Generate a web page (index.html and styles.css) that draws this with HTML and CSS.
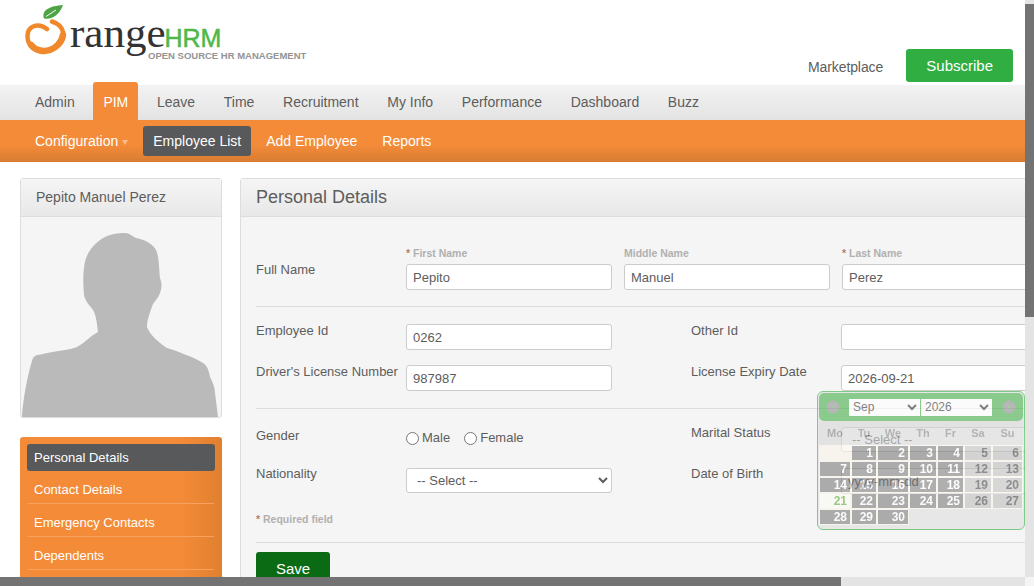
FILE: index.html
```html
<!DOCTYPE html>
<html lang="en">
<head>
    <meta charset="UTF-8">
    <title>OrangeHRM</title>
    <link rel="stylesheet" href="styles.css">
</head>
<body>
<div class="page">

    <header class="top">
        <div class="logo">
            <svg class="logo-mark" width="45" height="56" viewBox="25 0 45 56">
                <path d="M47 29C38 22 27 26 27.500 37C28 47 36 51.500 45 50.500C56 49.500 65 42 63 32C62 27 58 23.500 52 21.500" fill="none" stroke="#f0892c" stroke-width="4.500" stroke-linecap="round"/>
                <path d="M31 45C36 51 44 52 50 50C56 48 62 42 63 35" fill="none" stroke="#f0892c" stroke-width="6.500" stroke-linecap="round"/>
                <path d="M44 18.500C41 10 50 6 63 5C60 13 54 20 44 18.500Z" fill="#4ea444"/>
                <path d="M46 16.500L56 10" stroke="#fff" stroke-width="1"/>
            </svg>
            <div class="logo-text">
                <div class="logo-word">range<span class="logo-hrm">HRM</span></div>
                <div class="logo-tag">OPEN SOURCE HR MANAGEMENT</div>
            </div>
        </div>
        <a class="market">Marketplace</a>
        <a class="subscribe">Subscribe</a>
    </header>

    <nav class="tabs">
        <a>Admin</a>
        <a class="tab-on">PIM</a>
        <a>Leave</a>
        <a>Time</a>
        <a>Recruitment</a>
        <a>My Info</a>
        <a>Performance</a>
        <a>Dashboard</a>
        <a>Buzz</a>
    </nav>

    <nav class="subnav">
        <a>Configuration<span class="caret"></span></a>
        <a class="sub-on">Employee List</a>
        <a>Add Employee</a>
        <a>Reports</a>
    </nav>

    <main class="content">
        <aside class="side">
            <div class="profile">
                <div class="panel-head profile-name">Pepito Manuel Perez</div>
                <svg class="photo" width="200" height="200" viewBox="21 217 200 200">
                    <path fill="#bababa" d="M22 417C23 400 28 372 33 358C36 354 40 355 43 354C55 351 70 350 77 347C85 343 90 336 98 332C97 323 96 315 93 310C88 304 85 300 84 295C83 285 83 275 84 268C85 255 92 245 103 238C110 234 118 233 125 233C129 233 132 236 136 238C145 240 152 243 156 250C159 256 159 268 160 278C162 283 162 288 160 293C158 298 155 301 153 304C150 312 147 320 147 327C150 335 158 342 167 348C180 352 195 358 203 363C208 366 209 372 210 377C213 383 215 388 215 393L218 417Z"/>
                </svg>
            </div>
            <ul class="side-menu">
                <li class="side-on">Personal Details</li>
                <li>Contact Details</li>
                <li>Emergency Contacts</li>
                <li>Dependents</li>
            </ul>
        </aside>

        <section class="panel">
            <h1 class="panel-head panel-title">Personal Details</h1>
            <form class="panel-body">
                <div class="name-row">
                    <label class="field-label name-label">Full Name</label>
                    <div class="name-field">
                        <span class="small-label"><i>*</i> First Name</span>
                        <input type="text" value="Pepito">
                    </div>
                    <div class="name-field">
                        <span class="small-label">Middle Name</span>
                        <input type="text" value="Manuel">
                    </div>
                    <div class="name-field">
                        <span class="small-label"><i>*</i> Last Name</span>
                        <input type="text" value="Perez">
                    </div>
                </div>
                <hr class="rule rule-a">
                <div class="form-row row-id">
                    <label class="field-label">Employee Id</label>
                    <input type="text" value="0262">
                    <label class="field-label col-b">Other Id</label>
                    <input type="text">
                </div>
                <div class="form-row">
                    <label class="field-label">Driver's License Number</label>
                    <input type="text" value="987987">
                    <label class="field-label col-b">License Expiry Date</label>
                    <input class="date-input" type="text" value="2026-09-21">
                </div>
                <hr class="rule rule-b">
                <div class="form-row row-gender">
                    <label class="field-label gender-label">Gender</label>
                    <div class="radios">
                        <label><input type="radio" name="gender">Male</label>
                        <label><input type="radio" name="gender">Female</label>
                    </div>
                    <label class="field-label col-b">Marital Status</label>
                    <select><option>-- Select --</option></select>
                </div>
                <div class="form-row row-last">
                    <label class="field-label">Nationality</label>
                    <select><option>-- Select --</option></select>
                    <label class="field-label col-b">Date of Birth</label>
                    <input class="date-input" type="text" value="yyyy-mm-dd">
                </div>
                <p class="small-label required"><i>*</i> Required field</p>
                <hr class="rule rule-c">
                <button class="save" type="button">Save</button>
            </form>
        </section>
    </main>

    <div class="calendar">
        <div class="cal-head">
            <svg class="cal-arrow" width="14" height="14" viewBox="0 0 14 14"><circle cx="7" cy="7" r="6.500" fill="#8c8c8c"/><path d="M8.500 4L5 7L8.500 10Z" fill="#6fae74"/></svg>
            <select class="cal-select"><option>Sep</option></select>
            <select class="cal-select"><option>2026</option></select>
            <svg class="cal-arrow" width="14" height="14" viewBox="0 0 14 14"><circle cx="7" cy="7" r="6.500" fill="#8c8c8c"/><path d="M5.500 4L9 7L5.500 10Z" fill="#6fae74"/></svg>
        </div>
        <div class="cal-week">
            <span>Mo</span><span>Tu</span><span>We</span><span>Th</span><span>Fr</span><span>Sa</span><span>Su</span>
        </div>
        <div class="cal-days">
            <span class="blank"></span><span>1</span><span>2</span><span>3</span><span>4</span><span class="wknd">5</span><span class="wknd">6</span>
            <span>7</span><span>8</span><span>9</span><span>10</span><span>11</span><span class="wknd">12</span><span class="wknd">13</span>
            <span>14</span><span>15</span><span>16</span><span>17</span><span>18</span><span class="wknd">19</span><span class="wknd">20</span>
            <span class="today">21</span><span>22</span><span>23</span><span>24</span><span>25</span><span class="wknd">26</span><span class="wknd">27</span>
            <span>28</span><span>29</span><span>30</span>
        </div>
    </div>

    <div class="scroll-y"><div class="scroll-y-thumb"></div></div>
    <div class="scroll-x"><div class="scroll-x-thumb"></div></div>
</div>
</body>
</html>
```

FILE: styles.css
```css
html, body {
    margin: 0;
    padding: 0;
    height: 100%;
    overflow: hidden;
    background: #fff;
}
body {
    font-family: "Liberation Sans", Arial, sans-serif;
    font-size: 13px;
    color: #5d5d5d;
}
.page {
    position: relative;
    width: 1034px;
    height: 586px;
    overflow: hidden;
}

/* header */
.top {
    display: flex;
    align-items: flex-start;
    width: 1025px;
    height: 85px;
    box-sizing: border-box;
    padding-left: 25px;
}
.logo {
    display: flex;
    width: 280px;
}
.logo-mark {
    flex: none;
}
.logo-word {
    font-family: "Liberation Serif", serif;
    font-size: 43px;
    line-height: 43px;
    margin-top: 11px;
    color: #333;
}
.logo-hrm {
    font-family: "Liberation Sans", sans-serif;
    font-size: 25px;
    color: #4fb848;
    margin-left: -1px;
    -webkit-text-stroke: 0.5px #4fb848;
}
.logo-tag {
    margin-left: 78px;
    margin-top: -10px;
    font-size: 9.500px;
    line-height: 11px;
    font-weight: bold;
    white-space: nowrap;
    color: #949494;
}
.market {
    margin-left: 503px;
    margin-top: 59px;
    font-size: 14px;
    line-height: 16px;
    letter-spacing: -0.1px;
}
.subscribe {
    margin-left: 23px;
    margin-top: 49px;
    width: 107px;
    height: 33px;
    line-height: 33px;
    text-align: center;
    background: #30ae42;
    color: #fff;
    font-size: 15px;
    border-radius: 3px;
}

/* main menu */
.tabs {
    display: flex;
    height: 35px;
    padding-left: 25px;
    gap: 8.700px;
    background: linear-gradient(#f3f3f3, #e3e3e3);
    font-size: 14px;
    line-height: 35px;
}
.tabs a {
    padding: 0 10px;
}
.tabs .tab-on {
    margin-top: -3px;
    line-height: 41px;
    background: #f38b39;
    color: #fff;
    border-radius: 3px 3px 0 0;
}
.subnav {
    display: flex;
    align-items: center;
    height: 42px;
    padding-left: 25px;
    background: linear-gradient(#f38b39 0, #f38b39 60%, #d87c31 100%);
    color: #fff;
    font-size: 14px;
}
.subnav a {
    padding: 0 10px;
    margin-right: 5px;
    line-height: 30px;
}
.caret {
    display: inline-block;
    margin-left: 4px;
    vertical-align: 1px;
    border-top: 5px solid #f9bd8c;
    border-left: 3px solid transparent;
    border-right: 3px solid transparent;
}
.subnav .sub-on {
    background: #58595b;
    border-radius: 3px;
}

/* page content */
.content {
    display: flex;
    gap: 18px;
    padding: 16px 0 0 20px;
}
.side {
    flex: none;
    width: 202px;
}
.panel-head {
    margin: 0;
    background: linear-gradient(#f5f5f5, #e8e8e8);
    border-bottom: 1px solid #ddd;
    font-weight: normal;
}
.profile {
    border: 1px solid #ddd;
    border-radius: 3px;
    background: #f5f5f5;
    height: 238px;
}
.profile-name {
    height: 37px;
    line-height: 37px;
    padding-left: 15px;
    font-size: 14px;
}
.photo {
    display: block;
}
.side-menu {
    list-style: none;
    margin: 19px 0 0;
    padding: 7px;
    height: 200px;
    box-sizing: border-box;
    border-radius: 3px;
    background: linear-gradient(to right, #f38b39 0, #f38b39 80%, #e0802f 100%);
    color: #fff;
}
.side-menu li {
    height: 33px;
    padding: 11px 0 0 7px;
    margin: 0 1px;
    line-height: 16px;
    border-bottom: 1px solid #f7a25f;
    box-sizing: border-box;
}
.side-menu li:not(.side-on) {
    padding-left: 6px;
}
.side-menu .side-on {
    height: 27px;
    margin: 0;
    padding-top: 0;
    line-height: 27px;
    background: #58595b;
    border: 0;
    border-radius: 3px;
}
.panel {
    flex: none;
    width: 1010px;
    height: 420px;
    border: 1px solid #ddd;
    border-radius: 3px 0 0 0;
    background: #f5f5f5;
}
.panel-title {
    height: 37px;
    line-height: 37px;
    padding-left: 15px;
    font-size: 18px;
}
.panel-body {
    padding: 29px 0 0 15px;
}
.panel-body input[type=text],
.panel-body select {
    box-sizing: border-box;
    width: 206px;
    height: 26px;
    padding: 0 6px;
    border: 1px solid #ccc;
    border-radius: 3px;
    background: #fff;
    font: 13px "Liberation Sans", Arial, sans-serif;
    color: #5d5d5d;
}
.panel-body select {
    height: 25px;
}
.panel-body .date-input {
    width: 179px;
    height: 25px;
}
.name-row {
    display: flex;
    gap: 12px;
}
.field-label {
    display: block;
    margin-top: 1px;
    line-height: 12px;
}
.name-label {
    width: 138px;
    margin-top: 18px;
}
.name-field {
    display: flex;
    flex-direction: column;
    gap: 4px;
}
.small-label {
    font-size: 10.500px;
    line-height: 14px;
    font-weight: bold;
    color: #b0b0b0;
}
.small-label i {
    font-style: normal;
    color: #b5806a;
}
.rule {
    width: 100%;
    height: 1px;
    margin: 0;
    border: 0;
    background: #ddd;
}
.rule-a {
    margin-top: 16px;
    margin-bottom: 17px;
}
.rule-b {
    margin-top: 17px;
    margin-bottom: 18px;
}
.rule-c {
    margin-bottom: 9px;
}
.form-row {
    display: grid;
    grid-template-columns: 150px 206px 79px 150px 206px;
    align-items: start;
    margin-bottom: 15px;
}
.row-gender {
    margin-bottom: 16px;
}
.row-gender .col-b {
    margin-top: 0;
}
.gender-label {
    margin-top: 3px;
}
.row-last .field-label {
    margin-top: 0;
}
.col-b {
    grid-column: 4;
}
.radios {
    display: flex;
    gap: 14px;
    padding-top: 4px;
    line-height: 14px;
}
.radios label {
    display: flex;
    align-items: center;
}
.radios input {
    margin: 0 3px 0 0;
}
.required {
    margin: 0;
    padding-top: 3px;
    height: 33px;
    box-sizing: border-box;
}
.save {
    width: 74px;
    height: 33px;
    border: 0;
    border-radius: 3px;
    background: #0b6b14;
    color: #fff;
    font: 15px "Liberation Sans", Arial, sans-serif;
}

/* date picker, caught half way through its fade in */
.calendar {
    position: absolute;
    left: 817px;
    top: 391px;
    box-sizing: border-box;
    width: 208px;
    height: 139px;
    padding: 1px;
    border: 1px solid #30ae42;
    border-radius: 6px;
    background: #dedede;
    opacity: 0.6;
}
.cal-head {
    display: flex;
    align-items: center;
    height: 28px;
    padding: 0 7px;
    box-sizing: border-box;
    border-radius: 5px;
    background: #43af49;
}
.cal-arrow {
    flex: none;
}
.cal-select {
    box-sizing: border-box;
    width: 71px;
    height: 17px;
    margin-left: 1px;
    padding: 0;
    border: 0;
    background: #fff;
    color: #333;
    font: 12px "Liberation Sans", Arial, sans-serif;
}
.cal-select:first-of-type {
    margin-left: 9px;
}
.cal-select + .cal-arrow {
    margin-left: 10px;
}
.cal-week,
.cal-days {
    display: grid;
    grid-template-columns: 30px 24px 30px 26px 25px 26px 29px;
    column-gap: 2px;
    margin-left: 1px;
}
.cal-week {
    height: 24px;
    margin-left: 0;
    padding-left: 1px;
    background: #d6d6d6;
    color: #808080;
    font-size: 11px;
    font-weight: bold;
    line-height: 24px;
    text-align: center;
}
.cal-days {
    grid-auto-rows: 14px;
    row-gap: 2px;
    margin-top: 1px;
    font-size: 12px;
    font-weight: bold;
    line-height: 14px;
    color: #fff;
    text-align: right;
}
.cal-days span {
    padding-right: 3px;
    background: #7a7a7a;
    box-shadow: 0 0 0 1px #f7f4e8;
}
.cal-days .wknd {
    background: #bcbcbc;
    color: #444;
}
.cal-days .blank {
    background: #f7f4e8;
}
.cal-days .today {
    background: #fbfaf5;
    color: #5dab2f;
}

/* scrollbars */
.scroll-y {
    position: absolute;
    right: 0;
    top: 0;
    width: 9px;
    height: 577px;
    background: #e4e4e4;
}
.scroll-y-thumb {
    height: 313px;
    margin-top: 4px;
    background: #737373;
}
.scroll-x {
    position: absolute;
    left: 0;
    bottom: 0;
    width: 1025px;
    height: 9px;
    background: #e4e4e4;
}
.scroll-x-thumb {
    width: 841px;
    height: 9px;
    background: #737373;
}
```
